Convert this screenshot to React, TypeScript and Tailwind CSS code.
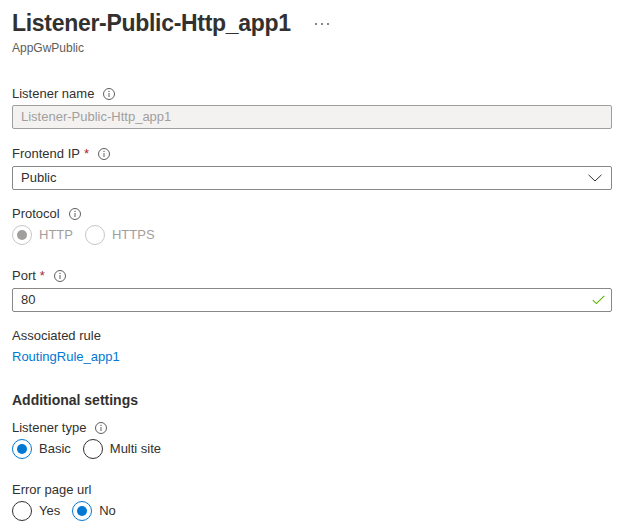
import { ReactNode } from "react";

function InfoIcon() {
  return (
    <svg width="12" height="12" viewBox="0 0 12 12" className="shrink-0">
      <circle cx="6" cy="6" r="5.5" fill="none" stroke="#605e5c" strokeWidth="1" />
      <line x1="6" y1="5" x2="6" y2="9" stroke="#605e5c" strokeWidth="1" />
      <circle cx="6" cy="3.4" r="0.7" fill="#605e5c" />
    </svg>
  );
}

function Label({ children, required, info }: { children: ReactNode; required?: boolean; info?: boolean }) {
  return (
    <div className="flex items-center h-5 text-[13px] leading-5 text-[#323130]">
      <span>{children}</span>
      {required && <span className="ml-[4px] text-[#a4262c]">*</span>}
      {info && (
        <span className="ml-[9px] flex items-center">
          <InfoIcon />
        </span>
      )}
    </div>
  );
}

interface RadioProps {
  label: string;
  checked?: boolean;
  disabled?: boolean;
}

function Radio({ label, checked, disabled }: RadioProps) {
  const ring = disabled ? "border-[#c8c6c4]" : checked ? "border-[#0078d4]" : "border-[#323130]";
  const dot = disabled ? "bg-[#a19f9d]" : "bg-[#0078d4]";
  return (
    <div className="flex items-center h-5">
      <span className={`w-5 h-5 rounded-full border ${ring} flex items-center justify-center`}>
        {checked && <span className={`w-[10px] h-[10px] rounded-full ${dot}`} />}
      </span>
      <span className={`ml-[7px] text-[13px] leading-5 ${disabled ? "text-[#a19f9d]" : "text-[#323130]"}`}>
        {label}
      </span>
    </div>
  );
}

export default function App() {
  return (
    <div
      className="w-[621px] h-[528px] bg-white px-3 pt-[7px] overflow-hidden text-[#323130]"
      style={{ fontFamily: '"Liberation Sans", Arial, sans-serif' }}
    >
      <div className="flex items-center h-8">
        <h1 className="text-[23px] leading-8 font-bold tracking-[-0.3px] text-[#323130]">
          Listener-Public-Http_app1
        </h1>
        <div className="ml-[24px] mt-[2px] flex gap-[4px]">
          <span className="w-[2px] h-[2px] rounded-full bg-[#605e5c]" />
          <span className="w-[2px] h-[2px] rounded-full bg-[#605e5c]" />
          <span className="w-[2px] h-[2px] rounded-full bg-[#605e5c]" />
        </div>
      </div>
      <div className="mt-[1px] text-[12px] leading-4 text-[#605e5c]">AppGwPublic</div>

      <div className="mt-[28px]">
        <Label info>Listener name</Label>
      </div>
      <div className="mt-[1px] w-[600px] h-6 border border-[#a19f9d] bg-[#f3f2f1] rounded-[2px] px-2 flex items-center text-[13px] text-[#a19f9d]">
        Listener-Public-Http_app1
      </div>

      <div className="mt-[15px]">
        <Label required info>Frontend IP</Label>
      </div>
      <div className="mt-[2px] w-[600px] h-6 border border-[#8a8886] rounded-[2px] pl-2 pr-[9px] flex items-center justify-between text-[13px] text-[#323130]">
        <span>Public</span>
        <svg width="14" height="8" viewBox="0 0 14 8">
          <path d="M0.5 0.8 L7 7 L13.5 0.8" fill="none" stroke="#323130" strokeWidth="1" />
        </svg>
      </div>

      <div className="mt-[14px]">
        <Label info>Protocol</Label>
      </div>
      <div className="mt-[1px] flex items-center gap-3">
        <Radio label="HTTP" checked disabled />
        <Radio label="HTTPS" disabled />
      </div>

      <div className="mt-[21px]">
        <Label required info>Port</Label>
      </div>
      <div className="mt-[2px] w-[600px] h-6 border border-[#8a8886] rounded-[2px] pl-2 pr-[6px] flex items-center justify-between text-[13px] text-[#323130]">
        <span>80</span>
        <svg width="13" height="10" viewBox="0 0 13 10">
          <path d="M0.8 5.2 L4.4 8.6 L12.3 0.8" fill="none" stroke="#5db300" strokeWidth="1.1" />
        </svg>
      </div>

      <div className="mt-[14px]">
        <Label>Associated rule</Label>
      </div>
      <div className="mt-[1px] text-[13px] leading-5 text-[#0078d4]">RoutingRule_app1</div>

      <div className="mt-[23px] text-[14px] leading-5 font-bold text-[#323130]">Additional settings</div>

      <div className="mt-[8px]">
        <Label info>Listener type</Label>
      </div>
      <div className="mt-[1px] flex items-center gap-3">
        <Radio label="Basic" checked />
        <Radio label="Multi site" />
      </div>

      <div className="mt-[21px]">
        <Label>Error page url</Label>
      </div>
      <div className="mt-[1px] flex items-center gap-3">
        <Radio label="Yes" />
        <Radio label="No" checked />
      </div>
    </div>
  );
}
